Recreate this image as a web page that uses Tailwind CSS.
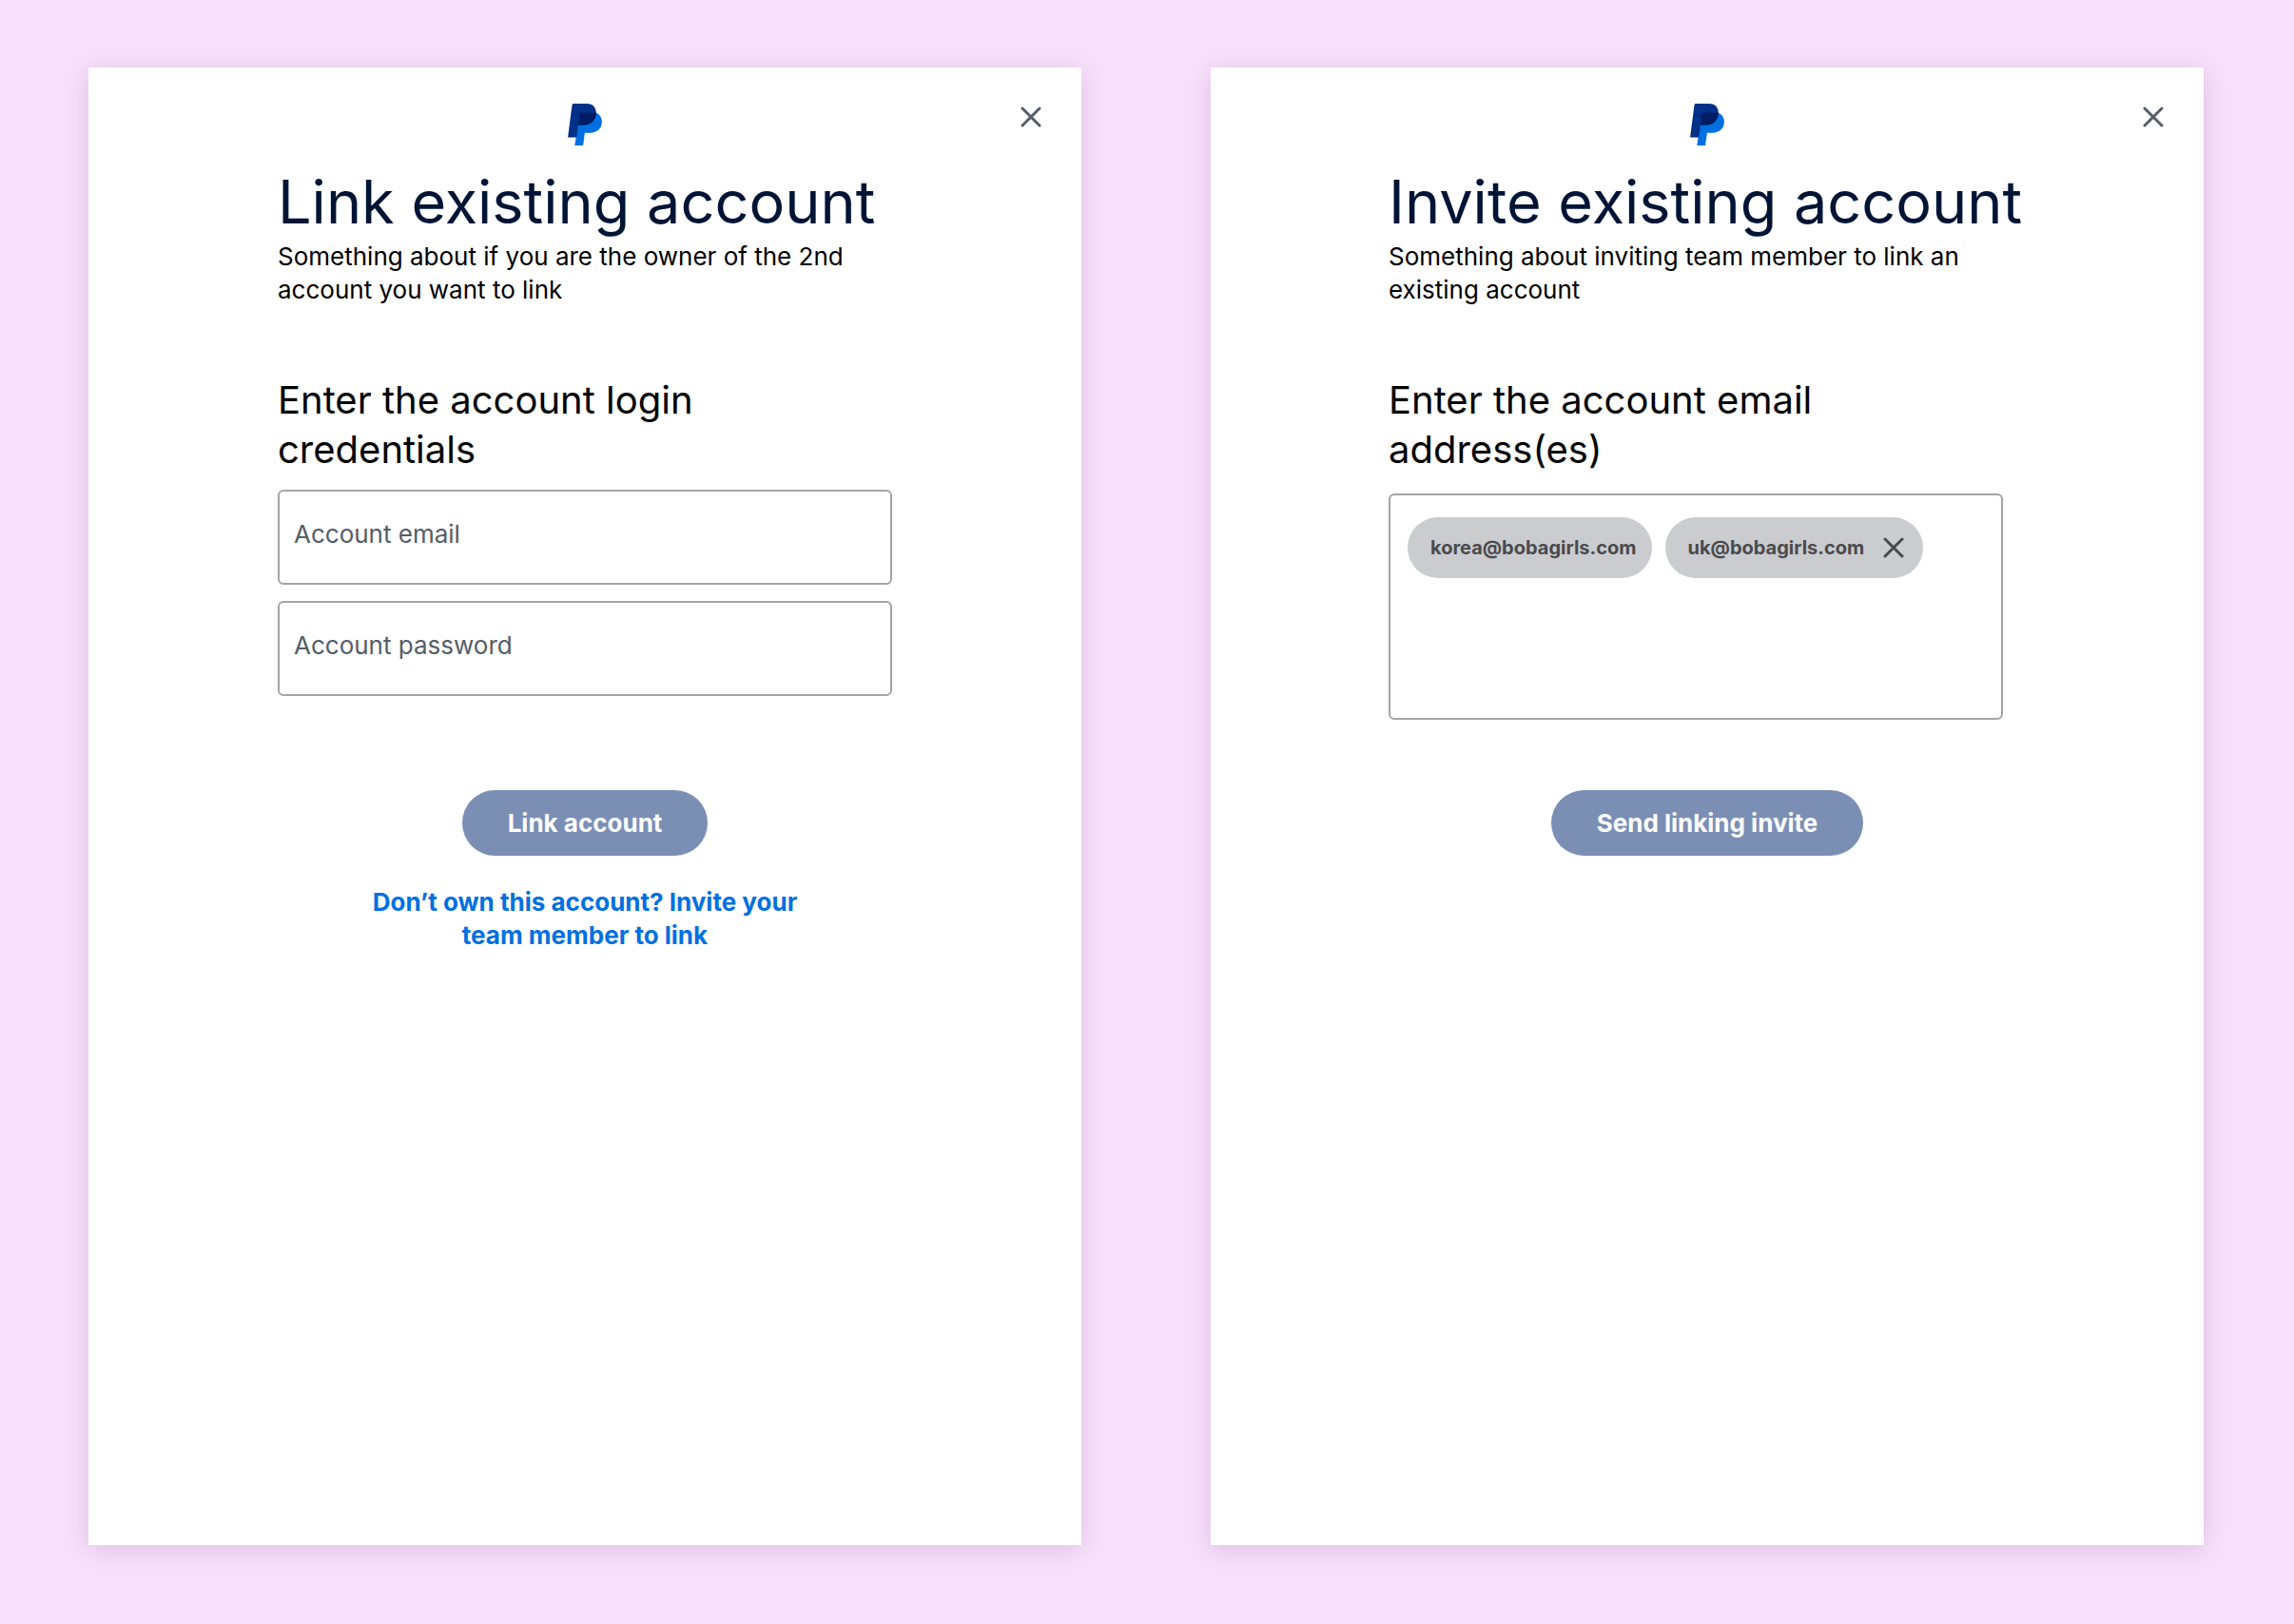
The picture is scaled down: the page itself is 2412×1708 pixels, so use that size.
<!DOCTYPE html>
<html lang="en">
<head>
  <meta charset="UTF-8" />
  <meta name="viewport" content="width=device-width, initial-scale=1.0" />
  <title>PayPal - Link accounts</title>
  <script src="https://cdn.jsdelivr.net/npm/@tailwindcss/browser@4"></script>
</head>
<body class="bg-[#f8dffc] font-['Inter','Liberation_Sans',sans-serif] text-black antialiased">

  <main class="grid min-h-screen grid-cols-1 gap-[136px] pt-[71px] pr-[95px] pb-[83px] pl-[93px] lg:grid-cols-2">

    <!-- Link existing account -->
    <section class="bg-white px-[42px] shadow-[0_4px_24px_rgba(0,0,0,0.12)]">
      <header class="grid grid-cols-[1fr_auto_1fr] items-start pt-[38px]">
        <svg class="col-start-2 h-11 w-9" viewBox="57 42 105 129" role="img" aria-label="PayPal">
          <path fill="#0070e0" d="M94 70H144C156 76 162 86 162 97C162 118 147 132 126 132H109L104 171H78Z" />
          <path fill="#003087" d="M75 42H116C134 42 144 54 144 70C144 93 128 108 106 108H89L84 146H57L70 46Q71 42 75 42Z" />
          <path fill="#001c64" d="M94 75Q94 70 99 70H144C144 93 128 108 106 108H89Z" />
        </svg>
        <button type="button" aria-label="Close" class="mt-[3px] justify-self-end">
          <svg class="size-[22px]" viewBox="0 0 22 22" fill="none" stroke="#545d68" stroke-width="3" stroke-linecap="round"><path d="M2 2L20 20M20 2L2 20" /></svg>
        </button>
      </header>

      <form class="mx-auto mt-[19px] w-[646px] max-w-full">
        <h1 class="text-[63px] leading-[80px] whitespace-nowrap text-[#001435]">Link existing account</h1>
        <p class="text-[26px] leading-[35px]">Something about if you are the owner of the 2nd account you want to link</p>

        <h2 class="mt-[73px] text-[40px] leading-[52px]">Enter the account login credentials</h2>
        <div class="mt-4 flex flex-col gap-[17px]">
          <input type="email" aria-label="Account email" placeholder="Account email" class="h-[100px] w-full rounded-[6px] border-2 border-[#a2a4a6] px-[15px] pb-2 text-[26px] placeholder:text-[#545d68]" />
          <input type="password" aria-label="Account password" placeholder="Account password" class="h-[100px] w-full rounded-[6px] border-2 border-[#a2a4a6] px-[15px] pb-2 text-[26px] placeholder:text-[#545d68]" />
        </div>

        <div class="mt-[99px] flex flex-col items-center">
          <button type="submit" class="h-[69px] rounded-full bg-[#7b8fb5] px-12 text-[26px] font-bold text-white">Link account</button>
          <a href="#invite" class="mt-[31px] max-w-[480px] text-center text-[26px] leading-[35px] font-bold text-[#0070e0]">Don’t own this account? Invite your team member to link</a>
        </div>
      </form>
    </section>

    <!-- Invite existing account -->
    <section id="invite" class="bg-white px-[42px] shadow-[0_4px_24px_rgba(0,0,0,0.12)]">
      <header class="grid grid-cols-[1fr_auto_1fr] items-start pt-[38px]">
        <svg class="col-start-2 h-11 w-9" viewBox="57 42 105 129" role="img" aria-label="PayPal">
          <path fill="#0070e0" d="M94 70H144C156 76 162 86 162 97C162 118 147 132 126 132H109L104 171H78Z" />
          <path fill="#003087" d="M75 42H116C134 42 144 54 144 70C144 93 128 108 106 108H89L84 146H57L70 46Q71 42 75 42Z" />
          <path fill="#001c64" d="M94 75Q94 70 99 70H144C144 93 128 108 106 108H89Z" />
        </svg>
        <button type="button" aria-label="Close" class="mt-[3px] justify-self-end">
          <svg class="size-[22px]" viewBox="0 0 22 22" fill="none" stroke="#545d68" stroke-width="3" stroke-linecap="round"><path d="M2 2L20 20M20 2L2 20" /></svg>
        </button>
      </header>

      <form class="mx-auto mt-[19px] w-[670px] max-w-full">
        <h1 class="text-[63px] leading-[80px] whitespace-nowrap text-[#001435]">Invite existing account</h1>
        <p class="max-w-[646px] text-[26px] leading-[35px]">Something about inviting team member to link an existing account</p>

        <h2 id="address-label" class="mt-[73px] max-w-[646px] text-[40px] leading-[52px]">Enter the account email address(es)</h2>
        <div class="mt-5 flex h-[238px] max-w-[646px] flex-wrap content-start gap-x-[14px] rounded-[6px] border-2 border-[#a2a4a6] px-[18px] pt-[23px] text-xl font-bold text-[#4a4a4c]">
          <span class="flex h-16 items-center rounded-full bg-[#cbccd0] pr-4 pl-6">korea@bobagirls.com</span>
          <span class="flex h-16 items-center gap-5 rounded-full bg-[#cbccd0] pr-5 pl-6">
            uk@bobagirls.com
            <button type="button" aria-label="Remove uk@bobagirls.com">
              <svg class="size-[22px]" viewBox="0 0 22 22" fill="none" stroke="#4a4a4c" stroke-width="3" stroke-linecap="round"><path d="M2 2L20 20M20 2L2 20" /></svg>
            </button>
          </span>
          <input type="email" aria-labelledby="address-label" class="mt-4 h-12 w-full outline-none" />
        </div>

        <div class="mt-[74px] flex justify-center">
          <button type="submit" class="h-[69px] rounded-full bg-[#7b8fb5] px-12 text-[26px] font-bold text-white">Send linking invite</button>
        </div>
      </form>
    </section>

  </main>

</body>
</html>
